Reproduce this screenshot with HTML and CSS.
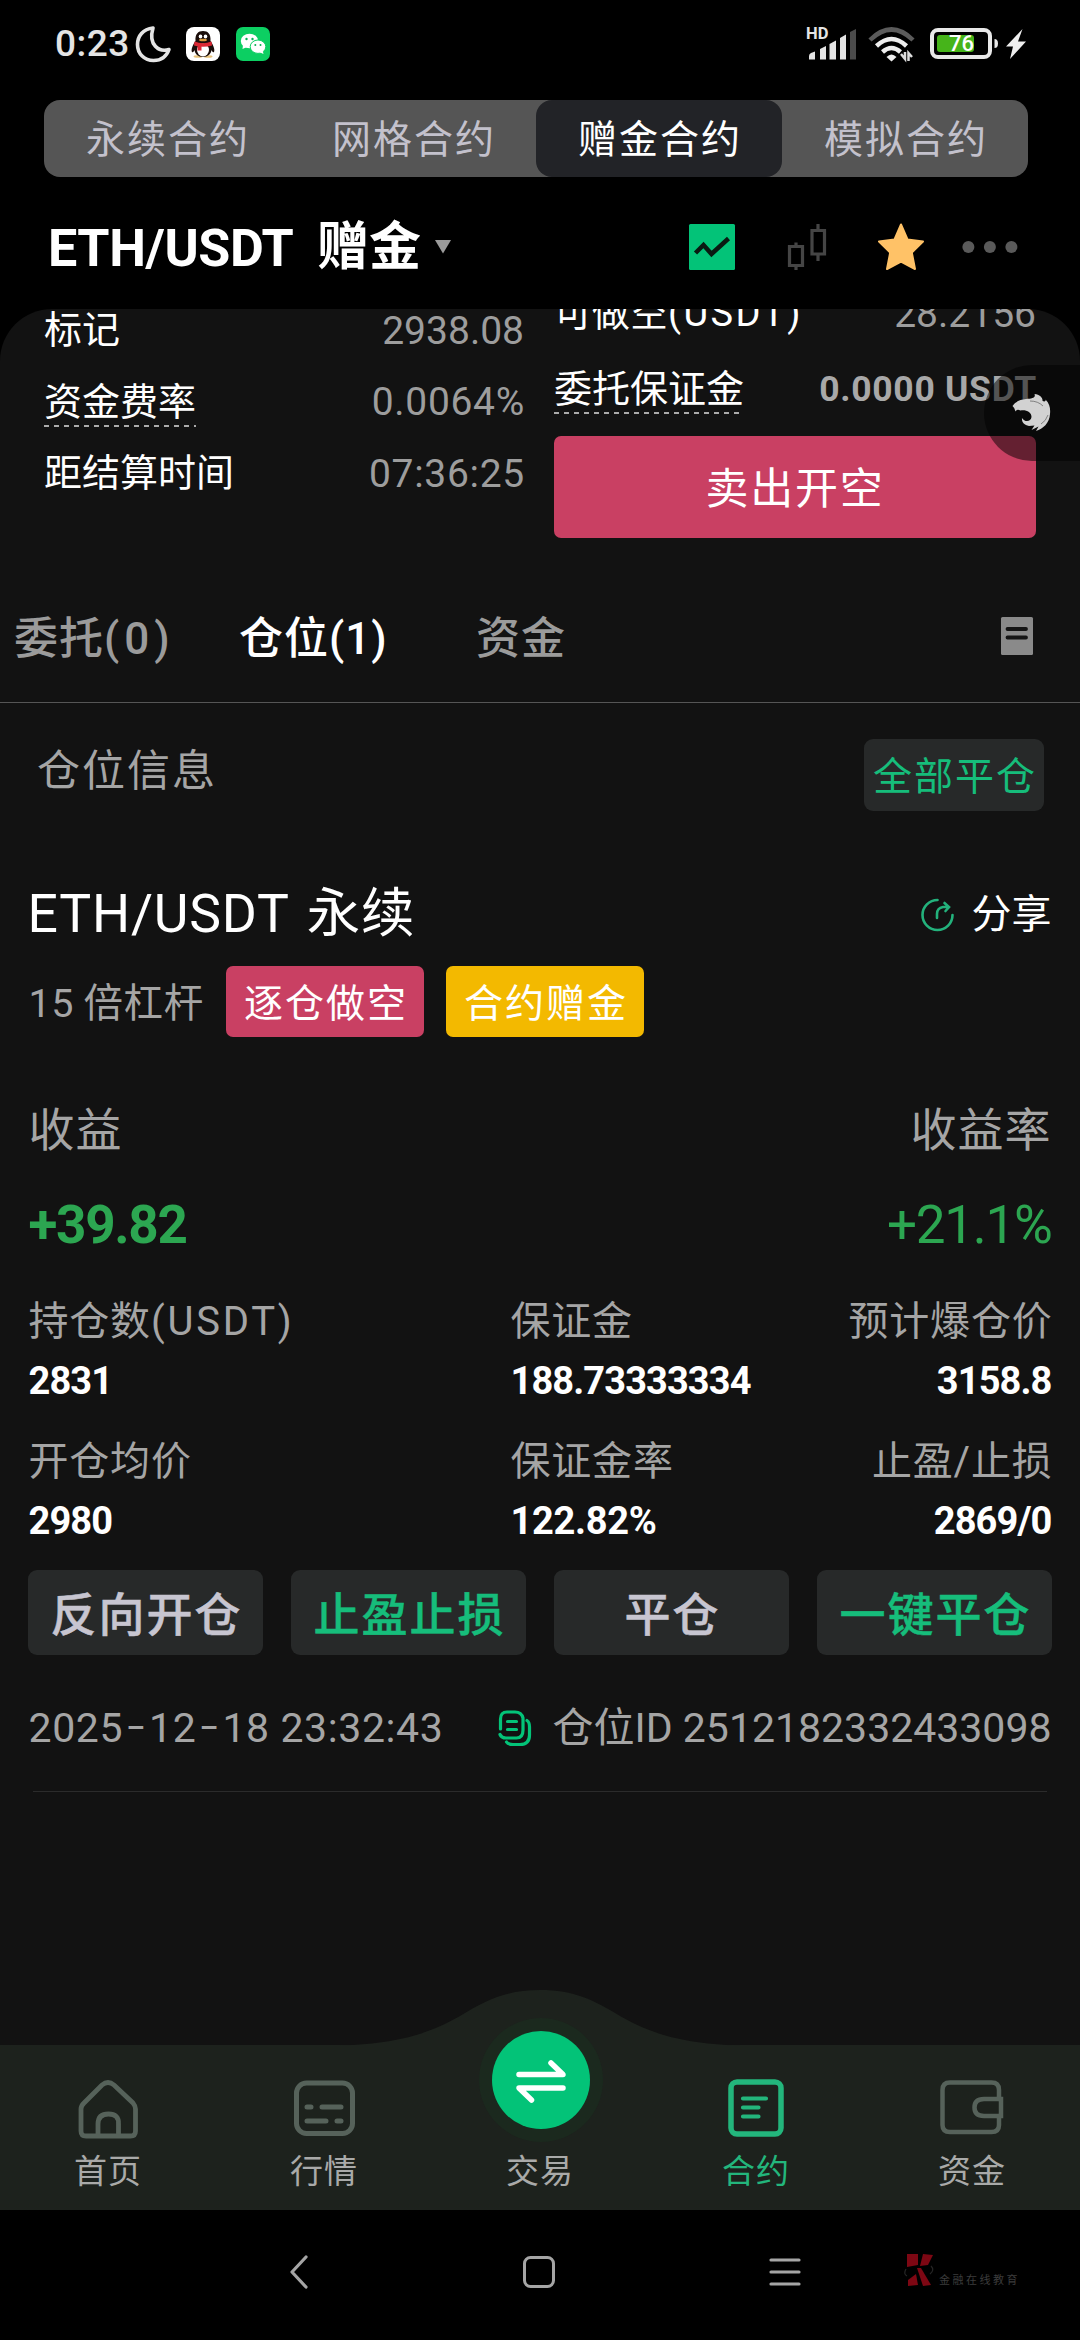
FILE: index.html
```html
<!DOCTYPE html>
<html lang="zh-CN">
<head>
<meta charset="utf-8">
<title>ETH/USDT 赠金合约</title>
<link rel="stylesheet" href="styles.css">
</head>
<body>
<div class="phone">
  <header class="status">
    <div class="status-left">
      <span class="clock">0:23</span>
      <svg class="moon" width="36" height="38" viewBox="0 0 36 38"><path d="M18 3C8 4 2.500 11 2.500 19.500C2.500 29 9.500 35.500 18.500 35.500C26 35.500 31.500 31.500 34 24.500C24 27.500 13 20 18 3Z" fill="none" stroke="#e4e4e4" stroke-width="3.600" stroke-linejoin="round"/></svg>
      <svg class="qq" width="34" height="34" viewBox="0 0 34 34"><rect width="34" height="34" rx="8" fill="#fff"/><ellipse cx="12" cy="29.500" rx="4.500" ry="1.300" fill="#e8c37a"/><ellipse cx="22" cy="29.500" rx="4.500" ry="1.300" fill="#e8c37a"/><path d="M9.500 14C9 7 12 4 17 4S25 7 24.500 14C28 19 29 23 28 25C27 26 26 24 25.500 23C25 27 22 30 17 30S9 27 8.500 23C8 24 7 26 6 25C5 23 6 19 9.500 14Z" fill="#1a0d0a"/><ellipse cx="17" cy="23" rx="6" ry="6.500" fill="#fff"/><path d="M8.500 14.500Q17 18 25.500 14.500L26 18.500Q17 21 8 18.500Z" fill="#dc2733"/><path d="M11.500 18H15.500V23.500H11.500Z" fill="#dc2733"/><ellipse cx="14.500" cy="9.500" rx="1.800" ry="2" fill="#fff"/><ellipse cx="19.500" cy="9.500" rx="1.800" ry="2" fill="#fff"/><ellipse cx="17" cy="13" rx="4" ry="1.300" fill="#d99a3c"/></svg>
      <svg class="wechat" width="34" height="34" viewBox="0 0 34 34"><rect width="34" height="34" rx="7" fill="#0ccf62"/><ellipse cx="13.500" cy="14" rx="8.700" ry="7.300" fill="#fff"/><path d="M7 18L6.500 22L11 20Z" fill="#fff"/><ellipse cx="22" cy="19.700" rx="7.800" ry="6.700" fill="#fff" stroke="#0ccf62" stroke-width="1"/><path d="M23 25L27.500 27L26.500 23Z" fill="#fff"/><g fill="#07b153"><circle cx="10.500" cy="12" r="1.200"/><circle cx="16.500" cy="12" r="1.200"/><circle cx="19.300" cy="18" r="1"/><circle cx="24.500" cy="18" r="1"/></g></svg>
    </div>
    <div class="status-right">
      <svg width="50" height="34" viewBox="0 0 50 34"><text x="-1" y="12" class="hd">HD</text><g fill="#e4e4e4"><path d="M2 32.500V29Q2 27 4 26L8 24.500V32.500Z"/><path d="M13 32.500V22L19 19V32.500Z"/><path d="M22.500 32.500V17L29 13.500V32.500Z"/><path d="M33 32.500V11L39 7.500V32.500Z"/></g><path d="M43 32.500V5L49 2V32.500Z" fill="#4b4b4b"/></svg>
      <svg class="wifi" width="48" height="36" viewBox="0 0 48 36"><g fill="none" stroke-width="4.500"><path d="M2 14Q23.500-7 45 14" stroke="#5b5b5b"/><path d="M8.500 20Q23.500 6 38.500 20" stroke="#eee"/><path d="M14.500 26Q23.500 18 32.500 26" stroke="#eee"/></g><path d="M18.500 31Q23.500 26 28.500 31L23.500 35.500Z" fill="#eee"/><path d="M33 28L37 33V26M44 31L40.500 27V35" fill="none" stroke="#ddd" stroke-width="2.500"/></svg>
      <svg class="battery" width="70" height="32" viewBox="0 0 70 32"><rect x="2" y="2" width="58" height="27" rx="6" fill="none" stroke="#e8e8e8" stroke-width="4"/><rect x="7" y="7" width="37" height="17" rx="3" fill="#46b41a"/><path d="M64.500 11Q68 11 68 15.500T64.500 20Z" fill="#e8e8e8"/><text x="31.500" y="23" class="pct">76</text></svg>
      <svg class="bolt" width="20" height="30" viewBox="0 0 20 30"><path d="M16.500 0L0 17.500H7L4 30L20 12.500H12Z" fill="#eee"/></svg>
    </div>
  </header>

  <nav class="segments">
    <span class="segment">永续合约</span>
    <span class="segment">网格合约</span>
    <span class="segment segment-on">赠金合约</span>
    <span class="segment">模拟合约</span>
  </nav>

  <div class="pair-bar">
    <div class="pair"><span class="pair-name">ETH/USDT</span><span class="pair-kind">赠金</span><svg width="18" height="14" viewBox="0 0 18 14"><path d="M1 0H17L9 13.500Z" fill="#9b9b9b"/></svg></div>
    <div class="pair-tools">
      <svg class="tool-trend" width="46" height="46" viewBox="0 0 46 46"><rect width="46" height="46" rx="1.500" fill="#03c378"/><path d="M6.500 29L14.500 21L22.500 30L39.500 14.500" fill="none" stroke="#0a1a12" stroke-width="4.500"/></svg>
      <svg class="tool-candle" width="38" height="46" viewBox="0 0 38 46"><path d="M8 18.500V22M8 42V46M1.500 22.500H14.500V41.500H1.500ZM30 0V6M30 31V37M24 6.500H36.500V30H24Z" fill="none" stroke="#454545" stroke-width="3.200"/></svg>
      <svg class="tool-star" width="48" height="48" viewBox="0 0 48 48"><path d="M24 1.500L30.500 16.500L46 18.500L34.800 29.500L38 46L24 38.500L10 46L13.200 29.500L2 18.500L17.500 16.500Z" fill="#ffc267" stroke="#ffc267" stroke-width="2" stroke-linejoin="round"/></svg>
      <svg class="tool-more" width="56" height="12" viewBox="0 0 56 12"><g fill="#5a5a5a"><circle cx="6.400" cy="6" r="6"/><circle cx="27.900" cy="6" r="6"/><circle cx="49.400" cy="6" r="6"/></g></svg>
    </div>
  </div>

  <main class="panel">
    <section class="order">
      <div class="stats">
        <div class="stat"><span>标记</span><b class="tight">2938.08</b></div>
        <div class="stat"><span class="hint">资金费率</span><b>0.0064%</b></div>
        <div class="stat"><span>距结算时间</span><b>07:36:25</b></div>
      </div>
      <div class="ticket">
        <div class="stat"><span>可做空<i class="unit">(USDT)</i></span><b class="tight">28.2156</b></div>
        <div class="stat stat-tall"><span class="hint">委托保证金</span><b class="strong">0.0000 USDT</b></div>
        <button class="sell">卖出开空</button>
      </div>
    </section>

    <nav class="tabs">
      <span class="tab">委托<i class="count">(0)</i></span>
      <span class="tab tab-on">仓位(1)</span>
      <span class="tab">资金</span>
      <svg class="tabs-doc" width="32" height="38" viewBox="0 0 32 38"><rect width="32" height="38" rx="1.500" fill="#8a8a8a"/><path d="M6.500 12H25M6.500 20.500H25" stroke="#151515" stroke-width="3.800" stroke-linecap="round"/></svg>
    </nav>

    <section class="info">
      <span class="info-title">仓位信息</span>
      <button class="close-all">全部平仓</button>
    </section>

    <article class="position">
      <div class="pos-head">
        <span class="pos-name">ETH/USDT 永续</span>
        <span class="share"><svg width="34" height="34" viewBox="0 0 34 34"><g fill="none" stroke="#23b27c" stroke-width="2.600" stroke-linecap="round"><path d="M16.500 2A15 15 0 1 0 31.500 17"/><path d="M16 20V16Q16 10 22 9H27M23.500 5L28 9L24.500 13"/></g></svg>分享</span>
      </div>
      <div class="badges">
        <span class="lever">15 倍杠杆</span>
        <span class="badge badge-short">逐仓做空</span>
        <span class="badge badge-bonus">合约赠金</span>
      </div>
      <div class="gain-labels"><span>收益</span><span>收益率</span></div>
      <div class="gains"><span class="gain">+39.82</span><span class="rate">+21.1%</span></div>
      <div class="figures">
        <div class="figure"><span>持仓数<i class="unit">(USDT)</i></span><b>2831</b></div>
        <div class="figure"><span>保证金</span><b>188.73333334</b></div>
        <div class="figure figure-end"><span>预计爆仓价</span><b>3158.8</b></div>
        <div class="figure"><span>开仓均价</span><b>2980</b></div>
        <div class="figure"><span>保证金率</span><b class="ratio">122.82%</b></div>
        <div class="figure figure-end"><span>止盈/止损</span><b>2869/0</b></div>
      </div>
      <div class="actions">
        <button class="action">反向开仓</button>
        <button class="action action-green">止盈止损</button>
        <button class="action">平仓</button>
        <button class="action action-green">一键平仓</button>
      </div>
      <div class="pos-foot">
        <span class="time">2025<i>-</i>12<i>-</i>18 23:32:43</span>
        <span class="pos-id"><svg width="34" height="38" viewBox="0 0 34 38"><g fill="none" stroke="#03c378" stroke-width="3.200" stroke-linecap="round"><path d="M2.500 19V9Q2.500 2 9 2H17Q23.500 2 25 8V20Q25 28 18.500 28H8Q3.500 28 2 24.500"/><path d="M29 10.500Q31.500 12 31.500 17V25Q31.500 34.500 22 34.500H15Q10 34.500 8.500 32"/><path d="M9.500 11.500H18.500M9.500 19.500H18.500"/></g></svg>仓位ID <em>2512182332433098</em></span>
      </div>
    </article>
  </main>

  <nav class="dock">
    <svg class="dock-hump" width="400" height="56" viewBox="0 0 400 56"><path d="M0 55.500C60 54 92 42 120 26C146 10 166 0 200 0S254 10 280 26C308 42 340 54 400 55.500V56H0Z" fill="#1d221d"/></svg>
    <svg class="dock-swap" width="126" height="126" viewBox="0 0 126 126"><circle cx="63" cy="63" r="62" fill="#1b291e"/><circle cx="63" cy="63" r="49" fill="#03c378"/><path d="M41 57.500H85L73 46M85 71H41L53.500 83" fill="none" stroke="#fff" stroke-width="5.500" stroke-linecap="round" stroke-linejoin="round"/></svg>
    <div class="dock-item"><svg width="64" height="64" viewBox="0 0 64 64"><path d="M5 53V31Q5 28 8 25L26 7Q32 2 38 7L57 25Q59.500 28 59.500 31V53Q59.500 58 54.500 58H10Q5 58 5 53M22 57V46Q22 36 32.500 36T42.500 46V57" fill="none" stroke="#56625a" stroke-width="4.800"/></svg><span>首页</span></div>
    <div class="dock-item"><svg width="64" height="64" viewBox="0 0 64 64"><rect x="4.500" y="5" width="56" height="50.500" rx="10" fill="none" stroke="#56625a" stroke-width="5"/><path d="M15 29H19M30 29H49M15 43H34M45 43H49" stroke="#56625a" stroke-width="5" stroke-linecap="round"/></svg><span>行情</span></div>
    <div class="dock-item"><span>交易</span></div>
    <div class="dock-item dock-on"><svg width="64" height="64" viewBox="0 0 64 64"><rect x="7" y="4" width="50" height="52" rx="6" fill="none" stroke="#23b67c" stroke-width="5.500"/><path d="M19 20.500H42M19 29.500H34.500M19 38.500H34.500" stroke="#23b67c" stroke-width="4.200" stroke-linecap="round"/></svg><span>合约</span></div>
    <div class="dock-item"><svg width="64" height="64" viewBox="0 0 64 64"><path d="M59 20V12Q59 4.500 51.500 4.500H10Q2.500 4.500 2.500 12V47Q2.500 54 10 54H51.500Q59 54 59 47V39M61 21H44Q34.500 21 34.500 29.500T44 38H61Z" fill="none" stroke="#56625a" stroke-width="4.500"/></svg><span>资金</span></div>
  </nav>

  <footer class="sysnav">
    <svg width="20" height="34" viewBox="0 0 20 34"><path d="M17 2L3 17L17 32" fill="none" stroke="#a5a5a5" stroke-width="3.200" stroke-linecap="round" stroke-linejoin="round"/></svg>
    <svg width="34" height="34" viewBox="0 0 34 34"><rect x="2.500" y="2.500" width="29" height="29" rx="6" fill="none" stroke="#a5a5a5" stroke-width="3"/></svg>
    <svg width="32" height="28" viewBox="0 0 32 28"><path d="M2 2H30M2 14H30M2 26H30" stroke="#a5a5a5" stroke-width="3.200" stroke-linecap="round"/></svg>
  </footer>

  <div class="brand"><svg width="30" height="33" viewBox="0 0 30 33"><g fill="#7d0713"><path d="M3 0H14V11L3 13Z"/><path d="M19 0L29 1L24 11L16 12Z"/><path d="M13 14H17L27 31L19 32Z"/><path d="M4 26L12 20L14 31L4 32Z"/></g><path d="M2 15Q-1 20 3 22M27 12Q31 16 26 20" fill="none" stroke="#262626" stroke-width="1.200"/></svg><span>金融在线教育</span></div>

  <div class="floater"><svg width="40" height="40" viewBox="0 0 40 40"><path d="M.5 13C3 9 8 6.500 14 6C20 5.500 24 5 22.500 1C28 1.500 31 5 30.500 8C33 9 34 8 33.500 6.500C38 11 38.500 16 38 21C37.500 30 31 36 24 38L26.500 33.500L19.500 37L22.500 32.500L17 33C12 32 9.500 29 10 25C12.500 29.500 19 29 19.500 24C19.500 19 14 16.500 8.500 17.500C5.500 16 4.500 17 3.500 18.500Q3 15 .5 13Z" fill="#d2d2d2"/><path d="M18 8Q26 8 31 13M29 31Q34 28 36 22" fill="none" stroke="#6b6b6b" stroke-width=".8"/></svg></div>
</div>
</body>
</html>
```
FILE: styles.css
```css
* { box-sizing: border-box; }
body { margin: 0; background: #000; }
svg { display: block; flex: none; overflow: visible; }
b, i, em { font-weight: inherit; font-style: normal; }
button { padding: 0; border: 0; font: inherit; letter-spacing: inherit; }

.phone {
  position: relative;
  width: 1080px;
  height: 2340px;
  display: flex;
  flex-direction: column;
  overflow: hidden;
  background: #000;
  color: #fff;
  font-family: Roboto, "Noto Sans CJK SC", sans-serif;
  font-size: 39px;
  line-height: 1.2;
  white-space: nowrap;
}

/* status bar */
.status { height: 88px; margin-bottom: 12px; padding: 0 54px; display: flex; justify-content: space-between; align-items: center; }
.status-left, .status-right { display: flex; align-items: center; }
.clock { width: 81px; padding-left: 1px; font-size: 37px; font-weight: 500; letter-spacing: 0.5px; color: #e4e4e4; }
.qq { margin-left: 15px; }
.wechat { margin-left: 16px; }
.wifi { margin-left: 11px; }
.battery { margin-left: 14px; }
.bolt { margin-left: 6px; }
.hd { font: 700 16.500px Roboto, sans-serif; fill: #e4e4e4; }
.pct { font: 500 22px Roboto, sans-serif; fill: #fff; text-anchor: middle; }

/* contract type switch */
.segments { height: 77px; margin: 0 52px 0 44px; display: flex; border-radius: 16px; background: #555; color: #c3c1cc; }
.segment { width: 246px; display: flex; align-items: center; justify-content: center; border-radius: 16px; letter-spacing: 2px; padding: 4px 0 0 2px; }
.segment-on { background: #222327; color: #fff; }

.pair-bar { height: 132px; padding: 8px 62px 0 48px; display: flex; justify-content: space-between; align-items: center; }
.pair { display: flex; align-items: center; font-size: 52px; font-weight: 700; }
.pair-name { width: 269px; letter-spacing: -0.4px; padding-top: 5px; }
.pair-kind { margin-right: 13px; padding-top: 2px; }
.pair-tools { display: flex; align-items: center; }
.tool-candle { margin-left: 53px; }
.tool-star { margin-left: 51px; }
.tool-more { margin-left: 37px; }

.panel { flex: 1; min-height: 0; overflow: hidden; border-radius: 52px 52px 0 0; background: #121212; }
.unit { letter-spacing: 2.400px; }

/* market stats and order ticket */
.order { height: 229px; padding: 0 44px; display: flex; gap: 30px; }
.stats { width: 480px; margin-top: -13px; }
.ticket { width: 482px; margin-top: -31px; }
.stat { height: 72px; display: flex; justify-content: space-between; align-items: center; font-size: 38px; }
.stats .stat:first-child { height: 70px; }
.stat-tall { height: 78px; }
.stat b { margin-right: -1px; font-size: 39px; letter-spacing: 0.7px; color: #9d9d9d; }
.stat b.tight { margin-right: 0; letter-spacing: 0; }
.stat b.strong { font-size: 35.500px; font-weight: 700; letter-spacing: 0.7px; color: #a8a8a8; }
.hint { height: 50px; line-height: 50px; background: repeating-linear-gradient(90deg, #aaa 0 5px, transparent 5px 10px) 0 100% / 100% 2px no-repeat; }
.sell { width: 482px; height: 102px; margin-top: 8px; padding-top: 5px; border-radius: 7px; background: #c94063; color: #fff; font-size: 43px; letter-spacing: 1.800px; }

.tabs { height: 127px; margin-top: 38px; padding: 1px 47px 0 14px; display: flex; align-items: center; border-bottom: 1px solid #555; font-size: 44px; font-weight: 500; letter-spacing: 1px; color: #9b9b9b; }
.tab:nth-child(1) { width: 225px; }
.tab:nth-child(2) { width: 237px; }
.tab-on { color: #fff; }
.count { letter-spacing: 5px; }
.tabs-doc { margin-left: auto; margin-bottom: 8px; }

.info { height: 143px; padding: 0 36px 0 37px; display: flex; justify-content: space-between; align-items: center; }
.info-title { padding-bottom: 6px; font-size: 43px; letter-spacing: 2px; color: #a5a5a5; }
.close-all { width: 180px; height: 72px; border-radius: 9px; background: #272929; color: #16bd7b; letter-spacing: 2px; padding: 5px 0 0 2px; }

/* open position */
.position { margin: 0 33px; padding: 0 0 33px; border-bottom: 1px solid #2b2b2b; color: #a5a5a5; }
.position > div { margin-left: -4.500px; margin-right: -4.500px; }
.pos-head { height: 120px; padding-top: 17px; display: flex; justify-content: space-between; align-items: center; color: #fff; }
.pos-name { margin-left: -1px; font-size: 53.500px; letter-spacing: 0.8px; word-spacing: 4px; }
.share { display: flex; align-items: center; gap: 17px; font-size: 40px; }
.badges { height: 71px; display: flex; align-items: center; letter-spacing: 2px; }
.lever { width: 197.500px; padding-top: 4px; font-size: 39.500px; letter-spacing: 0.6px; word-spacing: -1px; }
.badge { width: 198px; height: 71px; margin-right: 22px; padding: 5px 0 0 2px; display: flex; align-items: center; justify-content: center; border-radius: 7px; color: #fff; }
.badge-short { background: #c94063; }
.badge-bonus { background: #f3b900; }
.gain-labels, .gains { height: 60px; display: flex; justify-content: space-between; align-items: center; }
.gain-labels { margin-top: 63px; padding-top: 2px; font-size: 46px; letter-spacing: 1px; }
.gains { margin-top: 34px; padding-top: 4px; font-size: 53px; letter-spacing: -1.300px; color: #2ca651; }
.gain { font-weight: 700; }
.figures { margin-top: 46px; display: grid; grid-template-columns: 482px 300px 1fr; row-gap: 39px; }
.figure { display: flex; flex-direction: column; gap: 17px; }
.figure span { line-height: 44px; font-size: 40px; letter-spacing: 0.800px; }
.figure .unit { letter-spacing: 2.800px; }
.figure b { line-height: 40px; font-size: 38px; font-weight: 700; letter-spacing: -0.9px; color: #fff; }
.figure b.ratio { letter-spacing: -0.3px; }
.figure-end { align-items: flex-end; }
.figure-end span { margin-right: -1px; }
.actions { height: 85px; margin-top: 29px; display: grid; grid-template-columns: repeat(4, 235px); gap: 28px; }
.position > .actions { margin-left: -5px; margin-right: -5px; }
.action { border-radius: 9px; background: #272929; color: #c7c5d0; font-size: 46px; font-weight: 500; letter-spacing: 2px; padding: 6px 0 0 2px; -webkit-text-stroke: 0.5px currentColor; }
.action-green { color: #16bd7b; }
.pos-foot { height: 60px; margin-top: 43px; padding-top: 1px; display: flex; justify-content: space-between; align-items: center; font-size: 41px; }
.time { letter-spacing: 0.6px; }
.time i { display: inline-block; width: 26px; text-align: center; font-family: Inter, sans-serif; font-size: 48px; font-weight: 300; line-height: 0; }
.pos-id { display: flex; align-items: center; white-space: pre; }
.pos-id svg { margin-right: 21px; }

/* bottom dock */
.dock { position: relative; height: 165px; display: grid; grid-template-columns: repeat(5, 216px); background: #1d221d; color: #a9aaa9; font-size: 33px; letter-spacing: 1px; }
.dock-hump { position: absolute; left: 340px; top: -55px; }
.dock-swap { position: absolute; left: 478px; top: -28px; }
.dock-item { padding: 33px 0 18px; display: flex; flex-direction: column; align-items: center; justify-content: space-between; }
.dock-item span:only-child { margin-top: auto; }
.dock-on { color: #23b67c; }

.sysnav { height: 130px; padding: 0 279px 6px 289px; display: flex; justify-content: space-between; align-items: center; }

.brand { position: absolute; left: 904px; top: 2254px; display: flex; align-items: flex-end; gap: 5px; font-size: 11px; letter-spacing: 2.500px; color: #3c3c3c; }
.floater { position: absolute; left: 984px; top: 365px; width: 96px; height: 96px; padding: 28px; border-radius: 48px 0 0 48px; background: rgba(0, 0, 0, 0.5); }
```
